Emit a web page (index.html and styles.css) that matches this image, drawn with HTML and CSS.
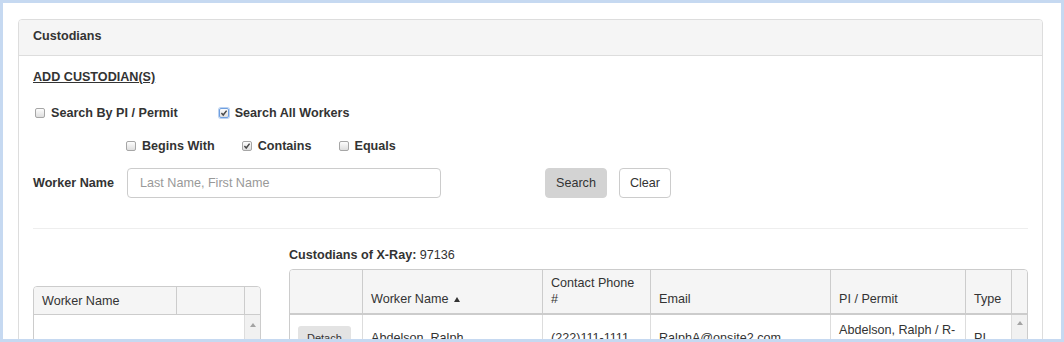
FILE: index.html
```html
<!DOCTYPE html>
<html lang="en">
<head>
    <meta charset="UTF-8">
    <meta name="viewport" content="width=device-width, initial-scale=1.0">
    <title>Custodians</title>
    <link rel="stylesheet" href="styles.css">
</head>
<body>
    <div class="frame">
        <div class="panel">
            <div class="panel-heading">Custodians</div>
            <div class="panel-body">
                <div class="add-title">ADD CUSTODIAN(S)</div>

                <div class="check-row scope">
                    <label class="check"><span class="box"></span>Search By PI / Permit</label>
                    <label class="check"><span class="box focus"><svg width="8" height="8" viewBox="0 0 8 8"><path d="M1.4 4.1 L3.2 6 L6.6 1.6" /></svg></span>Search All Workers</label>
                </div>

                <div class="check-row match">
                    <label class="check"><span class="box"></span>Begins With</label>
                    <label class="check"><span class="box"><svg width="8" height="8" viewBox="0 0 8 8"><path d="M1.4 4.1 L3.2 6 L6.6 1.6" /></svg></span>Contains</label>
                    <label class="check"><span class="box"></span>Equals</label>
                </div>

                <div class="search-row">
                    <label class="field-label" for="worker_name">Worker Name</label>
                    <input type="text" id="worker_name" class="name-input" placeholder="Last Name, First Name">
                    <div class="buttons">
                        <button type="button" class="btn btn-search">Search</button>
                        <button type="button" class="btn btn-clear">Clear</button>
                    </div>
                </div>

                <hr class="divider">

                <div class="lower">
                    <div class="workers-col">
                        <table class="grid workers">
                            <colgroup>
                                <col class="w-name">
                                <col class="w-extra">
                                <col class="w-scroll">
                            </colgroup>
                            <thead>
                                <tr>
                                    <th>Worker Name</th>
                                    <th></th>
                                    <th></th>
                                </tr>
                            </thead>
                            <tbody>
                                <tr>
                                    <td colspan="2" class="empty"></td>
                                    <td class="scroll"><div class="scroll-up low"></div></td>
                                </tr>
                            </tbody>
                        </table>
                    </div>

                    <div class="custodians-col">
                        <div class="list-title"><b>Custodians of X-Ray:</b> 97136</div>
                        <table class="grid custodians">
                            <colgroup>
                                <col class="c-action">
                                <col class="c-name">
                                <col class="c-phone">
                                <col class="c-email">
                                <col class="c-permit">
                                <col class="c-type">
                                <col class="c-scroll">
                            </colgroup>
                            <thead>
                                <tr>
                                    <th></th>
                                    <th>Worker Name <span class="sort-asc"></span></th>
                                    <th>Contact Phone #</th>
                                    <th>Email</th>
                                    <th>PI / Permit</th>
                                    <th>Type</th>
                                    <th></th>
                                </tr>
                            </thead>
                            <tbody>
                                <tr>
                                    <td><button type="button" class="btn-detach">Detach</button></td>
                                    <td>Abdelson, Ralph</td>
                                    <td>(222)111-1111</td>
                                    <td>RalphA@onsite2.com</td>
                                    <td>Abdelson, Ralph / R-RSO</td>
                                    <td>PI</td>
                                    <td class="scroll"><div class="scroll-up"></div></td>
                                </tr>
                            </tbody>
                        </table>
                    </div>
                </div>
            </div>
        </div>
    </div>
</body>
</html>
```

FILE: styles.css
```css
/* page frame */
html, body {
    height: 100%;
}

body {
    margin: 0;
    font-family: "Liberation Sans", Arial, sans-serif;
    font-size: 12.6px;
    line-height: 18px;
    color: #333;
    background: #fff;
}

.frame {
    height: 100vh;
    box-sizing: border-box;
    border: 3px solid #c6d9f1;
    padding: 16px 18px 0 15px;
    overflow: hidden;
}

/* panel */
.panel {
    border: 1px solid #ddd;
    border-radius: 4px;
}

.panel-heading {
    background-color: #f5f5f5;
    border-bottom: 1px solid #ddd;
    border-radius: 3px 3px 0 0;
    padding: 9px 14px 11px;
    line-height: 15px;
    font-weight: bold;
}

.panel-body {
    padding: 12px 14px 0;
}

.add-title {
    font-weight: bold;
    text-decoration: underline;
}

/* checkboxes */
.check-row {
    display: flex;
    align-items: center;
    height: 18px;
}

.check-row.scope {
    margin-top: 18px;
    gap: 39px;
}

.check-row.match {
    margin-top: 15px;
    margin-left: 91px;
    gap: 25px;
}

.check {
    display: flex;
    align-items: center;
    font-weight: bold;
}

.box {
    width: 10px;
    height: 10px;
    box-sizing: border-box;
    margin: 0 6px 0 2px;
    border: 1px solid #a6a6a6;
    border-radius: 2px;
    background: linear-gradient(#fdfdfd, #dedede);
    display: flex;
    align-items: center;
    justify-content: center;
}

.box svg {
    display: block;
}

.box path {
    fill: none;
    stroke: #4a4a4a;
    stroke-width: 1.5;
}

.box.focus {
    border-color: #6f9fe0;
    box-shadow: 0 0 0 1px #bcd3f2;
}

/* search line */
.search-row {
    display: flex;
    align-items: center;
    height: 30px;
    margin-top: 13px;
}

.field-label {
    width: 94px;
    font-weight: bold;
}

.name-input {
    width: 314px;
    height: 30px;
    box-sizing: border-box;
    padding: 0 12px;
    border: 1px solid #ccc;
    border-radius: 4px;
    font: inherit;
    color: #555;
}

.name-input::placeholder {
    color: #999;
}

.buttons {
    display: flex;
    gap: 12px;
    margin-left: 104px;
}

.btn {
    height: 30px;
    padding: 0 10px;
    border: 1px solid #ccc;
    border-radius: 4px;
    background-color: #fff;
    font: inherit;
    color: #333;
}

.btn-search {
    background-color: #d3d3d3;
    border-color: #d3d3d3;
}

.divider {
    margin: 30px 0 0;
    border: 0;
    border-top: 1px solid #eee;
}

/* lists */
.lower {
    display: flex;
    gap: 28px;
}

.workers-col {
    width: 228px;
    flex: none;
    padding-top: 57px;
}

.custodians-col {
    flex: 1;
    padding-top: 17px;
}

.custodians {
    margin-top: 5px;
}

.grid {
    width: 100%;
    table-layout: fixed;
    border-collapse: separate;
    border-spacing: 0;
    border: 1px solid #ccc;
    border-radius: 4px 4px 0 0;
}

.grid th {
    background-color: #f5f5f5;
    font-weight: normal;
    text-align: left;
    vertical-align: bottom;
    padding: 5px 8px 6px;
    line-height: 16px;
    border-left: 1px solid #ccc;
    border-bottom: 2px solid #ccc;
}

.grid th:first-child {
    border-left: 0;
    border-top-left-radius: 3px;
}

.grid th:last-child {
    border-top-right-radius: 3px;
}

.grid td {
    padding: 7px 8px;
    line-height: 16px;
    vertical-align: middle;
    border-left: 1px solid #ddd;
}

.grid td:first-child {
    border-left: 0;
}

.workers th {
    padding: 6px 8px 5px;
    border-bottom-width: 1px;
}

.workers td.empty {
    height: 40px;
}

.w-name { width: 142px; }
.w-extra { width: 68px; }
.w-scroll { width: 16px; }

.c-action { width: 72px; }
.c-name { width: 180px; }
.c-phone { width: 108px; }
.c-email { width: 180px; }
.c-permit { width: 135px; }
.c-type { width: 46px; }
.c-scroll { width: 16px; }

.grid td.scroll {
    padding: 0;
    vertical-align: top;
    background-color: #f1f1f1;
}

.scroll-up {
    width: 0;
    height: 0;
    margin: 6px auto 0;
    border-left: 3.5px solid transparent;
    border-right: 3.5px solid transparent;
    border-bottom: 4px solid #a3a3a3;
}

.scroll-up.low {
    margin-top: 8px;
}

.sort-asc {
    display: inline-block;
    width: 0;
    height: 0;
    margin-left: 2px;
    border-left: 3px solid transparent;
    border-right: 3px solid transparent;
    border-bottom: 5px solid #333;
    vertical-align: 1px;
}

.btn-detach {
    height: 24px;
    padding: 0 9px;
    border: 0;
    border-radius: 3px;
    background-color: #e3e3e3;
    font-family: inherit;
    font-size: 11px;
    color: #333;
}
```
